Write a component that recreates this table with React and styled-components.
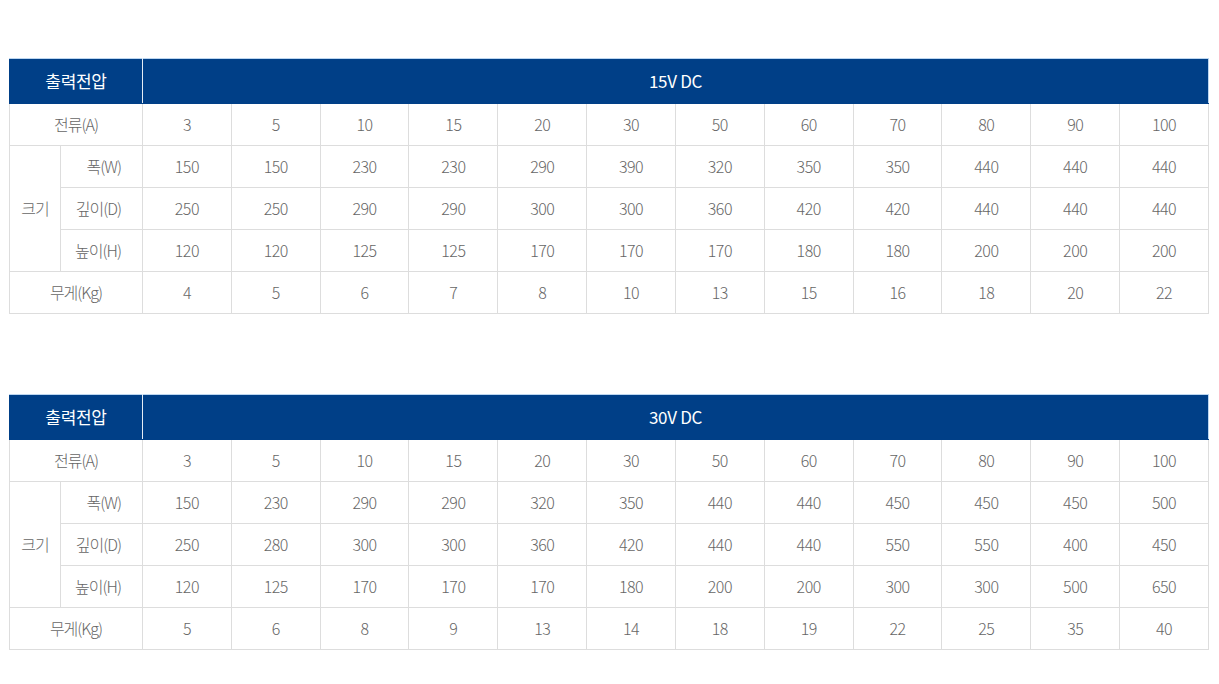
import React from "react";
import styled, { createGlobalStyle } from "styled-components";

const Global = createGlobalStyle`
  html, body { margin: 0; padding: 0; background: #fff; }
  body { font-family: "Noto Sans CJK KR", "Noto Sans", sans-serif; }
`;

const Page = styled.div`
  padding: 58px 10px 0 9px;
  display: flex;
  flex-direction: column;
  gap: 80px;
`;

const Table = styled.table`
  width: 1200px;
  border-collapse: collapse;
  table-layout: fixed;
  color: #666;
  font-size: 16px;
  letter-spacing: -0.5px;
`;

const HeadCell = styled.th`
  height: 42px;
  padding: 0 0 2px;
  background: #003f87;
  color: #fff;
  font-weight: 400;
  font-size: 17px;
  letter-spacing: -0.3px;
  border: 1px solid #003f87;
  border-top-color: #bcd6f0;
  border-right-color: ${(p) => (p.$strong ? "#e6edf5" : "#bcd6f0")};
  text-align: center;
  vertical-align: middle;
`;

const Cell = styled.td`
  height: 39px;
  padding: 0 0 2px;
  border: 1px solid #ddd;
  text-align: center;
  vertical-align: middle;
  font-weight: 300;
  line-height: 1;
`;

const LabelCell = styled(Cell)`
  text-align: ${(p) => (p.$right ? "right" : "center")};
  padding-right: ${(p) => (p.$right ? "21px" : "0")};
  letter-spacing: -1px;
`;

const tables = [
  {
    volt: "15V DC",
    w: [150, 150, 230, 230, 290, 390, 320, 350, 350, 440, 440, 440],
    d: [250, 250, 290, 290, 300, 300, 360, 420, 420, 440, 440, 440],
    h: [120, 120, 125, 125, 170, 170, 170, 180, 180, 200, 200, 200],
    kg: [4, 5, 6, 7, 8, 10, 13, 15, 16, 18, 20, 22],
  },
  {
    volt: "30V DC",
    w: [150, 230, 290, 290, 320, 350, 440, 440, 450, 450, 450, 500],
    d: [250, 280, 300, 300, 360, 420, 440, 440, 550, 550, 400, 450],
    h: [120, 125, 170, 170, 170, 180, 200, 200, 300, 300, 500, 650],
    kg: [5, 6, 8, 9, 13, 14, 18, 19, 22, 25, 35, 40],
  },
];

const amps = [3, 5, 10, 15, 20, 30, 50, 60, 70, 80, 90, 100];

function SpecTable({ t }) {
  return (
    <Table>
      <colgroup>
        <col style={{ width: 51 }} />
        <col style={{ width: 82 }} />
        {amps.map((a) => (
          <col key={a} />
        ))}
      </colgroup>
      <thead>
        <tr>
          <HeadCell colSpan={2} $strong>
            출력전압
          </HeadCell>
          <HeadCell colSpan={12}>{t.volt}</HeadCell>
        </tr>
      </thead>
      <tbody>
        <tr>
          <LabelCell colSpan={2}>전류(A)</LabelCell>
          {amps.map((v, i) => (
            <Cell key={i}>{v}</Cell>
          ))}
        </tr>
        <tr>
          <LabelCell rowSpan={3}>크기</LabelCell>
          <LabelCell $right>폭(W)</LabelCell>
          {t.w.map((v, i) => (
            <Cell key={i}>{v}</Cell>
          ))}
        </tr>
        <tr>
          <LabelCell $right>깊이(D)</LabelCell>
          {t.d.map((v, i) => (
            <Cell key={i}>{v}</Cell>
          ))}
        </tr>
        <tr>
          <LabelCell $right>높이(H)</LabelCell>
          {t.h.map((v, i) => (
            <Cell key={i}>{v}</Cell>
          ))}
        </tr>
        <tr>
          <LabelCell colSpan={2}>무게(Kg)</LabelCell>
          {t.kg.map((v, i) => (
            <Cell key={i}>{v}</Cell>
          ))}
        </tr>
      </tbody>
    </Table>
  );
}

export default function App() {
  return (
    <>
      <Global />
      <Page>
        {tables.map((t) => (
          <SpecTable key={t.volt} t={t} />
        ))}
      </Page>
    </>
  );
}
